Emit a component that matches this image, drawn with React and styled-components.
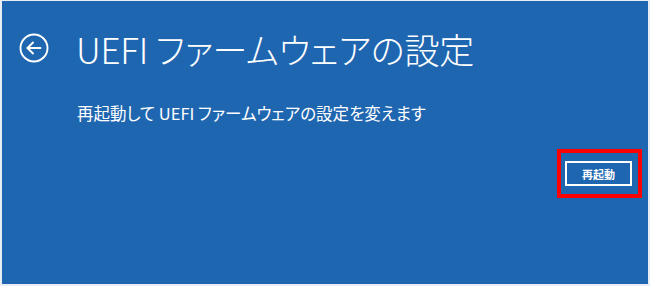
import React from "react";
import styled, { createGlobalStyle } from "styled-components";

const Global = createGlobalStyle`
  html, body { margin: 0; padding: 0; background: #ffffff; }
  body { font-family: "Noto Sans CJK JP", "Noto Sans", sans-serif; }
`;

const Frame = styled.div`
  box-sizing: border-box;
  width: 650px;
  height: 286px;
  background: #1f66b1;
  border: 2px solid #e9eef4;
  border-top-width: 1px;
  display: flex;
  flex-direction: column;
  color: #ffffff;
`;

const Header = styled.div`
  display: flex;
  align-items: center;
  gap: 26px;
  padding: 19px 0 0 16px;
  height: 56px;
`;

const Title = styled.h1`
  margin: 0;
  font-family: "Noto Sans CJK JP", sans-serif;
  font-weight: 300;
  font-size: 35px;
  font-feature-settings: "palt";
  letter-spacing: -0.2px;
  line-height: 1;
`;

const Description = styled.p`
  margin: 26px 0 0 75px;
  font-family: "Noto Sans CJK JP", sans-serif;
  font-size: 16.5px;
  font-feature-settings: "palt";
  font-weight: 400;
  line-height: 22px;
`;

const Actions = styled.div`
  display: flex;
  justify-content: flex-end;
  padding: 0 6px 0 0;
  margin-top: 25px;
`;

const Highlight = styled.div`
  border: 4px solid #ff0000;
  padding: 8px 6px 8px 4px;
`;

const Button = styled.button`
  box-sizing: border-box;
  width: 67px;
  height: 25px;
  background: #1f66b1;
  border: 2px solid #ffffff;
  color: #ffffff;
  font-family: "Noto Sans CJK JP", sans-serif;
  font-weight: 700;
  font-size: 11px;
  padding: 0;
  display: flex;
  align-items: center;
  justify-content: center;
`;

const BackIcon = () => (
  <svg width="32" height="32" viewBox="0 0 32 32" fill="none" stroke="#fff" strokeWidth="1.9" strokeLinecap="round" strokeLinejoin="round">
    <circle cx="16" cy="16" r="13.5" />
    <path d="M9.5 16 H22.5" />
    <path d="M15 10.5 L9.5 16 L15 21.5" />
  </svg>
);

export default function App() {
  return (
    <>
      <Global />
      <Frame>
        <Header>
          <BackIcon />
          <Title>UEFI ファームウェアの設定</Title>
        </Header>
        <Description>再起動して UEFI ファームウェアの設定を変えます</Description>
        <Actions>
          <Highlight>
            <Button>再起動</Button>
          </Highlight>
        </Actions>
      </Frame>
    </>
  );
}
